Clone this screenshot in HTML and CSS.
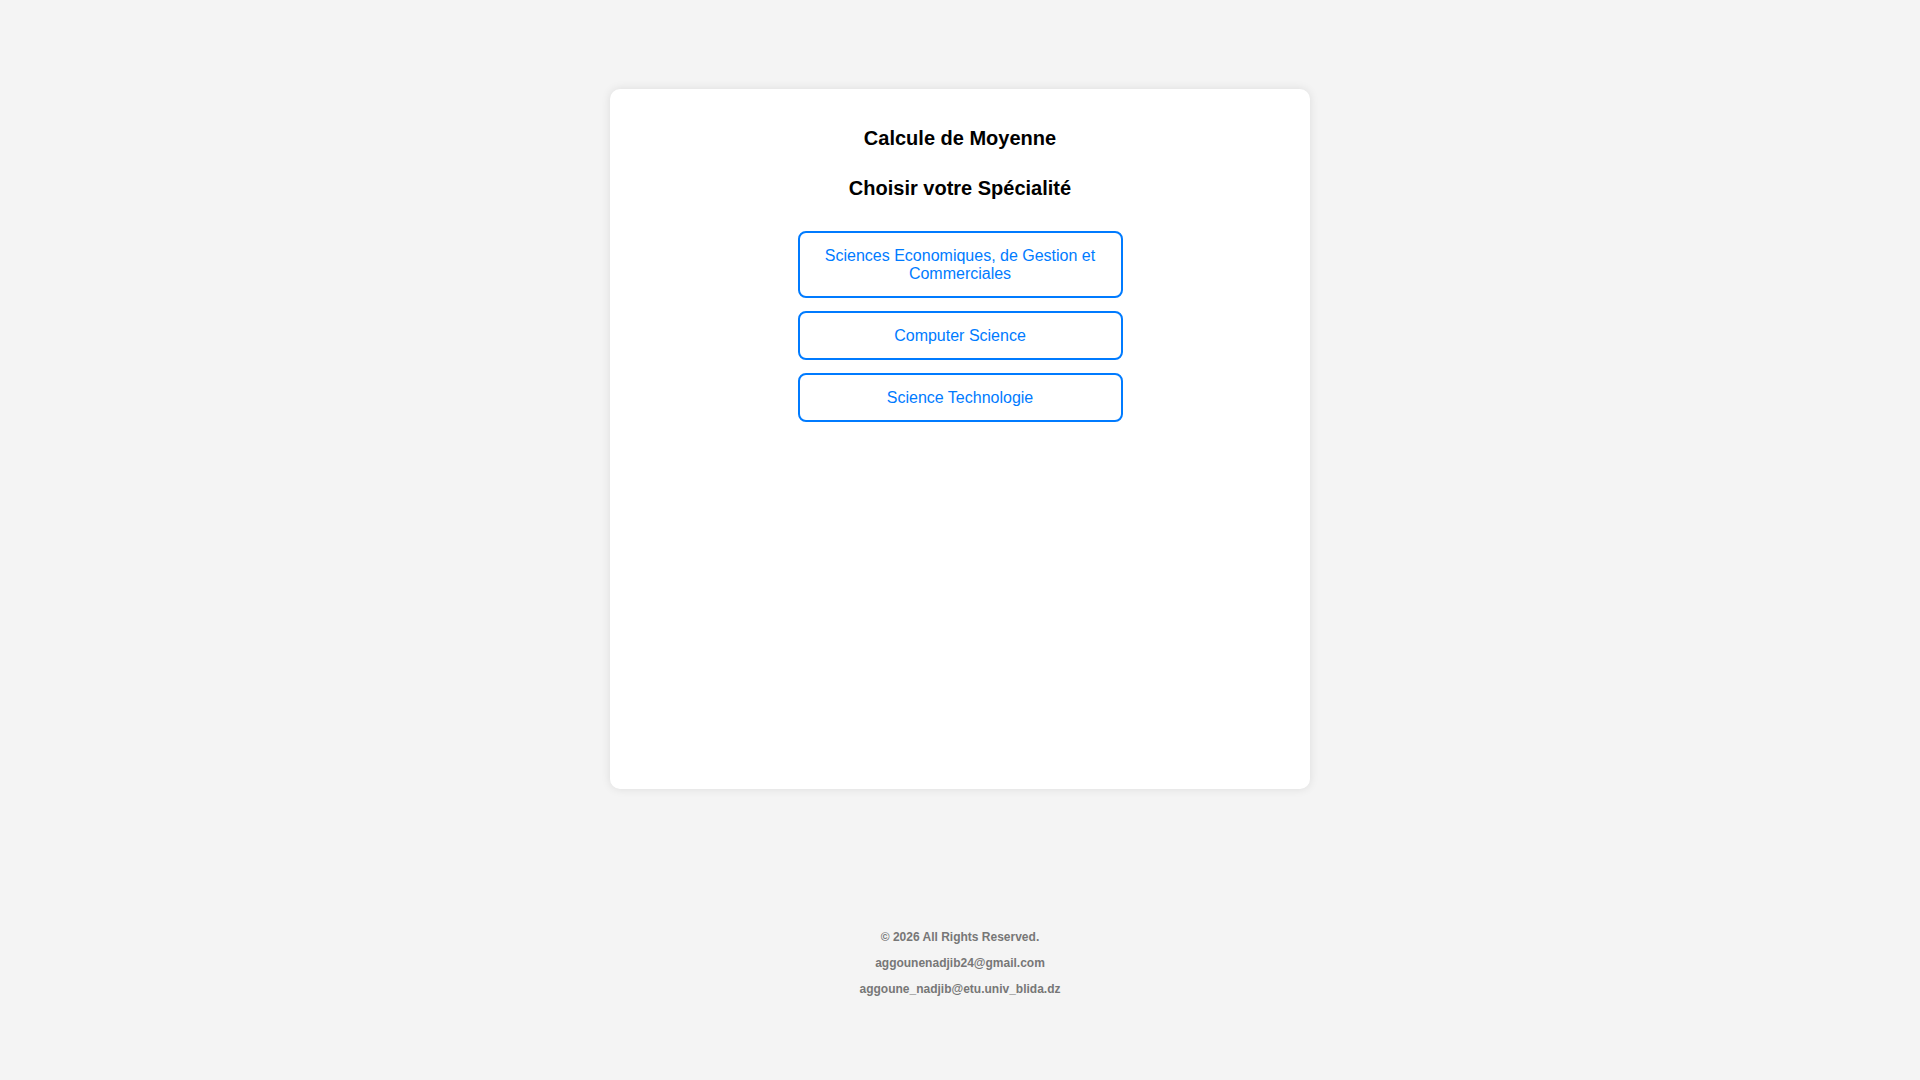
FILE: index.html
```html
<!DOCTYPE html>
<html lang="fr">
<head>
<meta charset="utf-8">
<title>Calcule de Moyenne</title>
<link rel="stylesheet" href="styles.css">
</head>
<body>
<main class="page">
  <section class="card">
    <h1 class="title">Calcule de Moyenne</h1>
    <h2 class="subtitle">Choisir votre Spécialité</h2>
    <div class="choices">
      <button class="choice">Sciences Economiques, de Gestion et Commerciales</button>
      <button class="choice">Computer Science</button>
      <button class="choice">Science Technologie</button>
    </div>
  </section>
  <footer class="footer">
    <p>© 2026 All Rights Reserved.</p>
    <p>aggounenadjib24@gmail.com</p>
    <p>aggoune_nadjib@etu.univ_blida.dz</p>
  </footer>
</main>
</body>
</html>
```

FILE: styles.css
```css
html, body {
  margin: 0;
  padding: 0;
}

body {
  background: #f4f4f4;
  font-family: "Liberation Sans", Arial, sans-serif;
  color: #000;
}

.page {
  display: flex;
  flex-direction: column;
  align-items: center;
  padding-top: 89px;
}

.card {
  box-sizing: border-box;
  width: 700px;
  height: 700px;
  background: #fff;
  border-radius: 10px;
  box-shadow: 0 0 10px rgba(0, 0, 0, 0.1);
  padding: 38px 20px 20px;
  display: flex;
  flex-direction: column;
  align-items: center;
}

.title,
.subtitle {
  margin: 0;
  font-size: 20px;
  font-weight: bold;
  line-height: 23px;
  text-align: center;
}

.subtitle {
  margin-top: 27px;
}

.choices {
  margin-top: 31px;
  display: flex;
  flex-direction: column;
  gap: 13px;
  width: 325px;
}

.choice {
  box-sizing: border-box;
  width: 100%;
  padding: 13.5px 16px;
  background: #fff;
  border: 2px solid #007bff;
  border-radius: 8px;
  color: #007bff;
  font-family: "Liberation Sans", Arial, sans-serif;
  font-size: 16px;
  line-height: 18px;
  text-align: center;
  cursor: pointer;
}

.footer {
  padding-top: 135px;
  text-align: center;
  color: #777;
  font-size: 12px;
  font-weight: bold;
}

.footer p {
  margin: 0;
  line-height: 26px;
}
```
